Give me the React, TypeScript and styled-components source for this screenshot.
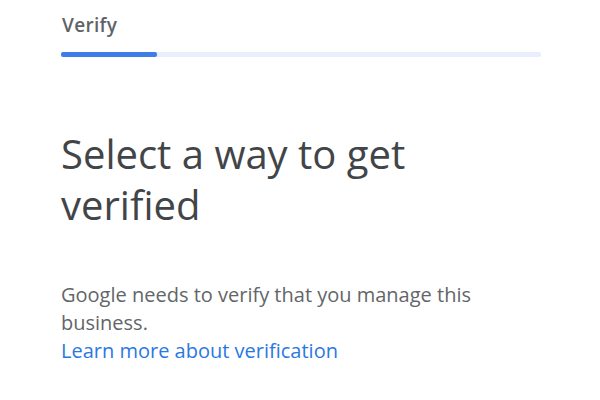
import React from "react";
import styled, { createGlobalStyle } from "styled-components";

const Global = createGlobalStyle`
  html, body { margin: 0; padding: 0; background: #ffffff; }
  body { font-family: "Open Sans", Roboto, Arial, sans-serif; }
`;

const Page = styled.div`
  width: 600px;
  height: 400px;
  box-sizing: border-box;
  padding: 13px 59px 0 61px;
  display: flex;
  flex-direction: column;
  overflow: hidden;
`;

const StepLabel = styled.div`
  font-size: 19px;
  font-weight: 600;
  color: #5f6368;
  line-height: 24px;
  padding-left: 1px;
  letter-spacing: 0.3px;
`;

const Track = styled.div`
  margin-top: 15px;
  height: 5px;
  background: #e8eefb;
  border-radius: 2px;
  display: flex;
`;

const Fill = styled.div<{ $pct: number }>`
  width: ${(p) => p.$pct}%;
  background: #3f7ee8;
  border-radius: 2px;
`;

const Heading = styled.h1`
  margin: 71px 0 0 0;
  font-size: 40px;
  font-weight: 400;
  line-height: 51px;
  color: #424548;
  width: 400px;
`;

const Body = styled.p`
  margin: 51px 0 0 0;
  font-size: 20px;
  line-height: 28px;
  color: #636669;
  width: 430px;
`;

const Link = styled.a`
  color: #2a78e4;
  text-decoration: none;
  display: block;
`;

export default function App() {
  return (
    <>
      <Global />
      <Page>
        <StepLabel>Verify</StepLabel>
        <Track>
          <Fill $pct={20} />
        </Track>
        <Heading>Select a way to get verified</Heading>
        <Body>
          Google needs to verify that you manage this business.
          <Link href="#">Learn more about verification</Link>
        </Body>
      </Page>
    </>
  );
}
